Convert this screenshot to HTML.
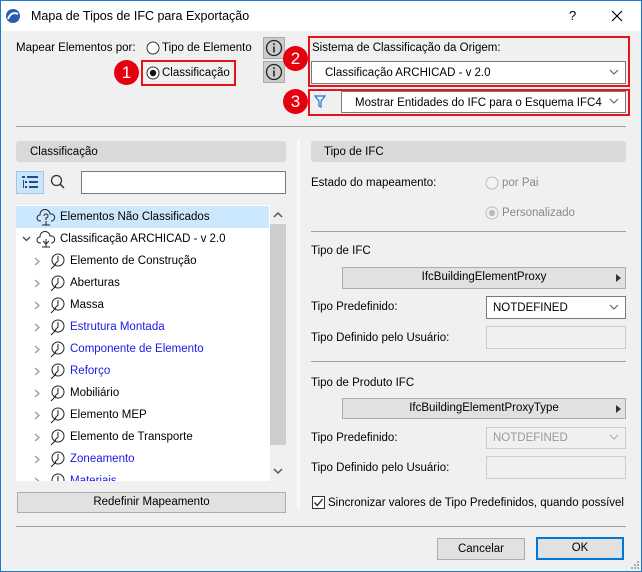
<!DOCTYPE html>
<html><head><meta charset="utf-8"><style>
*{margin:0;padding:0;box-sizing:border-box}
body{width:642px;height:572px;overflow:hidden;background:#f0f0f0;font-family:"Liberation Sans",sans-serif;font-size:11.5px;color:#000;position:relative}
.a{position:absolute}
.t{position:absolute;white-space:nowrap;line-height:14px}
.hdr{position:absolute;background:#d9d9d9;border-radius:3px;height:21px}
.sep{position:absolute;height:1px;background:#a0a0a0}
.btn{position:absolute;background:#e1e1e1;border:1px solid #adadad;text-align:center;line-height:19px}
.dd{position:absolute;background:#fff;border:1px solid #7a7a7a}
.chev{position:absolute;right:6px;top:50%;margin-top:-4px}
.red{position:absolute;border:2px solid #e8121a}
.badge{position:absolute;width:25px;height:25px;border-radius:50%;background:#e4000e;color:#fff;font-size:17px;text-align:center;line-height:25px}
.row{position:absolute;left:0;height:22px;width:253px}
.row .t{top:4px}
</style></head><body>
<div class="a" style="left:0;top:0;width:642px;height:31px;background:#fff"></div>
<div class="a" style="left:0;top:0;width:1px;height:572px;background:#1c7bd0"></div>
<div class="a" style="right:0;top:0;width:1px;height:572px;background:#1c7bd0"></div>
<div class="a" style="left:0;bottom:0;width:642px;height:1px;background:#1c7bd0"></div>
<div class="a" style="left:0;top:0;width:642px;height:1px;background:#1c7bd0"></div>
<svg class="a" style="left:5px;top:8px" width="16" height="16"><circle cx="8" cy="8" r="7" fill="#2a5db0"/><path d="M3 11 Q6 3 13 6" stroke="#fff" stroke-width="2" fill="none"/></svg>
<div class="t" style="left:31px;top:9px;font-size:12.5px">Mapa de Tipos de IFC para Exportação</div>
<div class="t" style="left:569px;top:9px;font-size:13px">?</div>
<svg class="a" style="left:611px;top:10px" width="12" height="12"><path d="M1 1L11 11M11 1L1 11" stroke="#000" stroke-width="1.2"/></svg>

<div class="t" style="left:16px;top:41px">Mapear Elementos por:</div>
<svg class="a" style="left:146px;top:41px" width="14" height="14"><circle cx="7" cy="7" r="6" fill="#fff" stroke="#333"/></svg>
<div class="t" style="left:162px;top:41px">Tipo de Elemento</div>
<div class="red" style="left:141px;top:60px;width:95px;height:26px"></div>
<svg class="a" style="left:146px;top:66px" width="14" height="14"><circle cx="7" cy="7" r="6" fill="#fff" stroke="#333"/><circle cx="7" cy="7" r="3.2" fill="#111"/></svg>
<div class="t" style="left:162px;top:66px">Classificação</div>
<div class="badge" style="left:114px;top:60px">1</div>
<div class="a" style="left:263px;top:37px;width:22px;height:22px;background:#ccc;border:1px solid #aaa"></div>
<svg class="a" style="left:265px;top:39px" width="18" height="18"><circle cx="9" cy="9" r="7.5" fill="none" stroke="#222" stroke-width="1.3"/><rect x="8.2" y="7.5" width="1.6" height="6" fill="#222"/><rect x="8.2" y="4.3" width="1.6" height="1.7" fill="#222"/></svg>
<div class="a" style="left:263px;top:61px;width:22px;height:22px;background:#ccc;border:1px solid #aaa"></div>
<svg class="a" style="left:265px;top:63px" width="18" height="18"><circle cx="9" cy="9" r="7.5" fill="none" stroke="#222" stroke-width="1.3"/><rect x="8.2" y="7.5" width="1.6" height="6" fill="#222"/><rect x="8.2" y="4.3" width="1.6" height="1.7" fill="#222"/></svg>

<div class="red" style="left:308px;top:36px;width:322px;height:51px"></div>
<div class="t" style="left:312px;top:41px">Sistema de Classificação da Origem:</div>
<div class="dd" style="left:311px;top:61px;width:315px;height:23px"><div class="t" style="left:13px;top:4px">Classificação ARCHICAD - v 2.0</div><svg class="chev" width="10" height="7"><path d="M1 1L5 5L9 1" stroke="#555" fill="none"/></svg></div>
<div class="badge" style="left:283px;top:46px">2</div>
<div class="red" style="left:308px;top:89px;width:322px;height:27px"></div>
<svg class="a" style="left:314px;top:95px" width="12" height="13"><path d="M1 1H11L7 6V12L5 11V6Z" fill="none" stroke="#1a7ad8" stroke-width="1.2"/></svg>
<div class="dd" style="left:341px;top:91px;width:285px;height:22px"><div class="t" style="left:13px;top:4px">Mostrar Entidades do IFC para o Esquema IFC4</div><svg class="chev" width="10" height="7"><path d="M1 1L5 5L9 1" stroke="#555" fill="none"/></svg></div>
<div class="badge" style="left:283px;top:89px">3</div>

<div class="sep" style="left:16px;top:126px;width:610px"></div>

<div class="hdr" style="left:16px;top:141px;width:270px"><div class="t" style="left:14px;top:4px">Classificação</div></div>
<div class="a" style="left:16px;top:171px;width:28px;height:23px;background:#cce4f7;border:1px solid #99c9ef"></div>
<svg class="a" style="left:22px;top:176px" width="17" height="13"><g fill="#1b4f8a"><rect x="0" y="0" width="3" height="2"/><rect x="5" y="0" width="11" height="2"/><rect x="1" y="4" width="1" height="8"/><rect x="3" y="5" width="2" height="2"/><rect x="7" y="5" width="9" height="2"/><rect x="3" y="10" width="2" height="2"/><rect x="7" y="10" width="9" height="2"/></g></svg>
<svg class="a" style="left:50px;top:174px" width="16" height="16"><circle cx="6.5" cy="6.5" r="5" fill="none" stroke="#333" stroke-width="1.3"/><path d="M10 10L14 14" stroke="#333" stroke-width="1.5"/></svg>
<div class="a" style="left:81px;top:171px;width:205px;height:23px;background:#fff;border:1px solid #7a7a7a"></div>

<div class="a" style="left:16px;top:205px;width:270px;height:276px;background:#fff;overflow:hidden">
 <div class="row" style="top:1px;background:#cce8ff"><svg class="a" style="left:20px;top:3px" width="20" height="17"><path d="M5 12H4a3 3 0 0 1 0-6a5 5 0 0 1 10-1a3.5 3.5 0 0 1 2 7h-1" fill="none" stroke="#222"/><path d="M8 7a2 2 0 1 1 2 2v2M10 12v4M6 16h8" fill="none" stroke="#222"/></svg><div class="t" style="left:44px">Elementos Não Classificados</div></div>
 <div class="row" style="top:23px"><svg class="a" style="left:6px;top:8px" width="9" height="6"><path d="M1 1L4.5 4.5L8 1" stroke="#444" fill="none" stroke-width="1.3"/></svg><svg class="a" style="left:20px;top:3px" width="20" height="17"><path d="M5 12H4a3 3 0 0 1 0-6a5 5 0 0 1 10-1a3.5 3.5 0 0 1 2 7h-1" fill="none" stroke="#222"/><path d="M10 8v8M7 10l3 3l3-3M6 16h8" fill="none" stroke="#222"/></svg><div class="t" style="left:44px">Classificação ARCHICAD - v 2.0</div></div>
</div>
<div class="a" style="left:270px;top:205px;width:16px;height:276px;background:#f0f0f0"></div>
<div class="a" style="left:270px;top:224px;width:16px;height:221px;background:#cdcdcd"></div>
<svg class="a" style="left:273px;top:212px" width="10" height="7"><path d="M1 5L5 1L9 5" stroke="#555" fill="none" stroke-width="1.5"/></svg>
<svg class="a" style="left:273px;top:468px" width="10" height="7"><path d="M1 1L5 5L9 1" stroke="#555" fill="none" stroke-width="1.5"/></svg>
<div class="btn" style="left:17px;top:492px;width:269px;height:21px">Redefinir Mapeamento</div>

<div class="a" style="left:297px;top:140px;width:3px;height:370px;background:#f9f9f9"></div>
<div class="hdr" style="left:311px;top:141px;width:315px"><div class="t" style="left:13px;top:4px">Tipo de IFC</div></div>
<div class="t" style="left:311px;top:176px">Estado do mapeamento:</div>
<svg class="a" style="left:485px;top:176px" width="14" height="14"><circle cx="7" cy="7" r="6" fill="#f4f4f4" stroke="#bcbcbc"/></svg>
<div class="t" style="left:502px;top:176px;color:#888">por Pai</div>
<svg class="a" style="left:485px;top:206px" width="14" height="14"><circle cx="7" cy="7" r="6" fill="#f4f4f4" stroke="#bcbcbc"/><circle cx="7" cy="7" r="3.2" fill="#bcbcbc"/></svg>
<div class="t" style="left:502px;top:206px;color:#888">Personalizado</div>
<div class="sep" style="left:311px;top:231px;width:315px"></div>
<div class="t" style="left:311px;top:244px">Tipo de IFC</div>
<div class="btn" style="left:342px;top:267px;width:284px;height:22px">IfcBuildingElementProxy<svg class="a" style="right:4px;top:6px" width="5" height="8"><path d="M0 0L5 4L0 8Z" fill="#333"/></svg></div>
<div class="t" style="left:311px;top:300px">Tipo Predefinido:</div>
<div class="dd" style="left:486px;top:296px;width:140px;height:23px"><div class="t" style="left:6px;top:4px">NOTDEFINED</div><svg class="chev" width="10" height="7"><path d="M1 1L5 5L9 1" stroke="#555" fill="none"/></svg></div>
<div class="t" style="left:311px;top:331px">Tipo Definido pelo Usuário:</div>
<div class="a" style="left:486px;top:326px;width:140px;height:23px;border:1px solid #ccc;background:#f0f0f0"></div>
<div class="sep" style="left:311px;top:361px;width:315px"></div>
<div class="t" style="left:311px;top:376px">Tipo de Produto IFC</div>
<div class="btn" style="left:342px;top:398px;width:284px;height:21px">IfcBuildingElementProxyType<svg class="a" style="right:4px;top:6px" width="5" height="8"><path d="M0 0L5 4L0 8Z" fill="#333"/></svg></div>
<div class="t" style="left:311px;top:431px">Tipo Predefinido:</div>
<div class="a" style="left:486px;top:427px;width:140px;height:22px;border:1px solid #ccc;background:#f0f0f0"><div class="t" style="left:6px;top:3px;color:#999">NOTDEFINED</div><svg class="chev" width="10" height="7"><path d="M1 1L5 5L9 1" stroke="#aaa" fill="none"/></svg></div>
<div class="t" style="left:311px;top:461px">Tipo Definido pelo Usuário:</div>
<div class="a" style="left:486px;top:456px;width:140px;height:23px;border:1px solid #ccc;background:#f0f0f0"></div>
<div class="a" style="left:312px;top:496px;width:13px;height:13px;border:1px solid #333;background:#fff"></div>
<svg class="a" style="left:313px;top:497px" width="11" height="11"><path d="M1.5 5.5L4.3 8.5L9.5 2" stroke="#222" fill="none" stroke-width="1.3"/></svg>
<div class="t" style="left:328px;top:496px">Sincronizar valores de Tipo Predefinidos, quando possível</div>

<div class="sep" style="left:16px;top:526px;width:610px"></div>
<div class="btn" style="left:437px;top:538px;width:88px;height:22px;line-height:20px">Cancelar</div>
<div class="btn" style="left:536px;top:537px;width:88px;height:23px;border:2px solid #0078d7;line-height:19px">OK</div>
<svg class="a" style="left:630px;top:560px" width="10" height="10"><g fill="#aaa"><rect x="7" y="1" width="2" height="2"/><rect x="4" y="4" width="2" height="2"/><rect x="7" y="4" width="2" height="2"/><rect x="1" y="7" width="2" height="2"/><rect x="4" y="7" width="2" height="2"/><rect x="7" y="7" width="2" height="2"/></g></svg>

<div class="a" style="left:16px;top:205px;width:254px;height:276px;overflow:hidden">
<div style="position:absolute;top:45px;left:0;width:254px">
<div class="row" style="top:0"><svg class="a" style="left:18px;top:7px" width="6" height="9"><path d="M1 1L5 4.5L1 8" stroke="#999" fill="none" stroke-width="1.3"/></svg><svg class="a" style="left:32px;top:2px" width="18" height="18"><circle cx="10" cy="8" r="6" fill="none" stroke="#222"/><path d="M10 4v5l-3 3M3 17l5-5" fill="none" stroke="#222"/></svg><div class="t" style="left:54px">Elemento de Construção</div></div>
<div class="row" style="top:22px"><svg class="a" style="left:18px;top:7px" width="6" height="9"><path d="M1 1L5 4.5L1 8" stroke="#999" fill="none" stroke-width="1.3"/></svg><svg class="a" style="left:32px;top:2px" width="18" height="18"><circle cx="10" cy="8" r="6" fill="none" stroke="#222"/><path d="M10 4v5l-3 3M3 17l5-5" fill="none" stroke="#222"/></svg><div class="t" style="left:54px">Aberturas</div></div>
<div class="row" style="top:44px"><svg class="a" style="left:18px;top:7px" width="6" height="9"><path d="M1 1L5 4.5L1 8" stroke="#999" fill="none" stroke-width="1.3"/></svg><svg class="a" style="left:32px;top:2px" width="18" height="18"><circle cx="10" cy="8" r="6" fill="none" stroke="#222"/><path d="M10 4v5l-3 3M3 17l5-5" fill="none" stroke="#222"/></svg><div class="t" style="left:54px">Massa</div></div>
<div class="row" style="top:66px"><svg class="a" style="left:18px;top:7px" width="6" height="9"><path d="M1 1L5 4.5L1 8" stroke="#999" fill="none" stroke-width="1.3"/></svg><svg class="a" style="left:32px;top:2px" width="18" height="18"><circle cx="10" cy="8" r="6" fill="none" stroke="#222"/><path d="M10 4v5l-3 3M3 17l5-5" fill="none" stroke="#222"/></svg><div class="t" style="left:54px;color:#1a1ae6">Estrutura Montada</div></div>
<div class="row" style="top:88px"><svg class="a" style="left:18px;top:7px" width="6" height="9"><path d="M1 1L5 4.5L1 8" stroke="#999" fill="none" stroke-width="1.3"/></svg><svg class="a" style="left:32px;top:2px" width="18" height="18"><circle cx="10" cy="8" r="6" fill="none" stroke="#222"/><path d="M10 4v5l-3 3M3 17l5-5" fill="none" stroke="#222"/></svg><div class="t" style="left:54px;color:#1a1ae6">Componente de Elemento</div></div>
<div class="row" style="top:110px"><svg class="a" style="left:18px;top:7px" width="6" height="9"><path d="M1 1L5 4.5L1 8" stroke="#999" fill="none" stroke-width="1.3"/></svg><svg class="a" style="left:32px;top:2px" width="18" height="18"><circle cx="10" cy="8" r="6" fill="none" stroke="#222"/><path d="M10 4v5l-3 3M3 17l5-5" fill="none" stroke="#222"/></svg><div class="t" style="left:54px;color:#1a1ae6">Reforço</div></div>
<div class="row" style="top:132px"><svg class="a" style="left:18px;top:7px" width="6" height="9"><path d="M1 1L5 4.5L1 8" stroke="#999" fill="none" stroke-width="1.3"/></svg><svg class="a" style="left:32px;top:2px" width="18" height="18"><circle cx="10" cy="8" r="6" fill="none" stroke="#222"/><path d="M10 4v5l-3 3M3 17l5-5" fill="none" stroke="#222"/></svg><div class="t" style="left:54px">Mobiliário</div></div>
<div class="row" style="top:154px"><svg class="a" style="left:18px;top:7px" width="6" height="9"><path d="M1 1L5 4.5L1 8" stroke="#999" fill="none" stroke-width="1.3"/></svg><svg class="a" style="left:32px;top:2px" width="18" height="18"><circle cx="10" cy="8" r="6" fill="none" stroke="#222"/><path d="M10 4v5l-3 3M3 17l5-5" fill="none" stroke="#222"/></svg><div class="t" style="left:54px">Elemento MEP</div></div>
<div class="row" style="top:176px"><svg class="a" style="left:18px;top:7px" width="6" height="9"><path d="M1 1L5 4.5L1 8" stroke="#999" fill="none" stroke-width="1.3"/></svg><svg class="a" style="left:32px;top:2px" width="18" height="18"><circle cx="10" cy="8" r="6" fill="none" stroke="#222"/><path d="M10 4v5l-3 3M3 17l5-5" fill="none" stroke="#222"/></svg><div class="t" style="left:54px">Elemento de Transporte</div></div>
<div class="row" style="top:198px"><svg class="a" style="left:18px;top:7px" width="6" height="9"><path d="M1 1L5 4.5L1 8" stroke="#999" fill="none" stroke-width="1.3"/></svg><svg class="a" style="left:32px;top:2px" width="18" height="18"><circle cx="10" cy="8" r="6" fill="none" stroke="#222"/><path d="M10 4v5l-3 3M3 17l5-5" fill="none" stroke="#222"/></svg><div class="t" style="left:54px;color:#1a1ae6">Zoneamento</div></div>
<div class="row" style="top:220px"><svg class="a" style="left:18px;top:7px" width="6" height="9"><path d="M1 1L5 4.5L1 8" stroke="#999" fill="none" stroke-width="1.3"/></svg><svg class="a" style="left:32px;top:2px" width="18" height="18"><circle cx="10" cy="8" r="6" fill="none" stroke="#222"/><path d="M10 4v5l-3 3M3 17l5-5" fill="none" stroke="#222"/></svg><div class="t" style="left:54px;color:#1a1ae6">Materiais</div></div>
</div></div>
</body></html>
